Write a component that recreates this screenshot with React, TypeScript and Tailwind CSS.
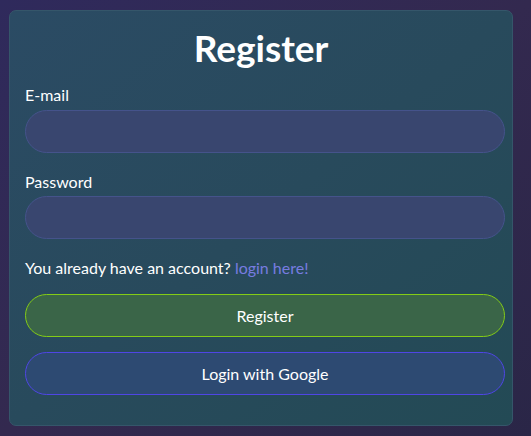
import React, { useState } from 'react';

const App: React.FC = () => {
  const [email, setEmail] = useState('');
  const [password, setPassword] = useState('');

  return (
    <div
      className="w-[531px] h-[436px] bg-gradient-to-br from-[#2f2a5c] via-[#33294f] to-[#2a2647] pt-[10px] pl-[9px]"
      style={{ fontFamily: '"Lato", "Noto Sans", sans-serif' }}
    >
      {/* カード */}
      <div className="w-[504px] h-[416px] rounded-[7px] border border-[#35566a] bg-gradient-to-br from-[#2b4b64] via-[#284a5c] to-[#234a55] px-[15px]">
        <h1 className="text-white font-bold text-[37px] text-center pt-[17px] leading-[40px]">Register</h1>

        <label className="block text-white text-[16px] mt-[17px] leading-[20px]">E-mail</label>
        <input
          type="email"
          value={email}
          onChange={e => setEmail(e.target.value)}
          className="block w-[480px] h-[43px] mt-[5px] rounded-full bg-[#39466f] border border-[#45538b] outline-none px-4 text-white"
        />

        <label className="block text-white text-[16px] mt-[19px] leading-[20px]">Password</label>
        <input
          type="password"
          value={password}
          onChange={e => setPassword(e.target.value)}
          className="block w-[480px] h-[43px] mt-[4px] rounded-full bg-[#39466f] border border-[#45538b] outline-none px-4 text-white"
        />

        <p className="text-white text-[16px] mt-[19px] leading-[20px]">
          You already have an account? <a href="#" className="text-[#777ce0]">login here!</a>
        </p>

        <button className="block w-[480px] h-[43px] mt-[16px] rounded-full bg-[#3a6548] border border-[#84cc16] text-white text-[16px]">
          Register
        </button>
        <button className="block w-[480px] h-[43px] mt-[15px] rounded-full bg-[#2d4a72] border border-[#4f46e5] text-white text-[16px]">
          Login with Google
        </button>
      </div>
    </div>
  );
};

export default App;
